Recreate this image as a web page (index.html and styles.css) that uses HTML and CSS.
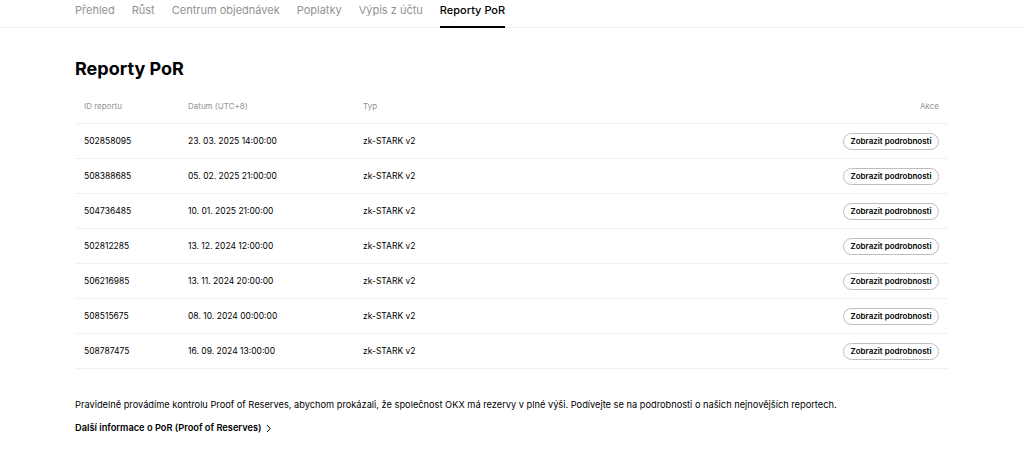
FILE: index.html
```html
<!DOCTYPE html>
<html lang="cs">
<head>
    <meta charset="UTF-8" />
    <meta name="viewport" content="width=device-width, initial-scale=1.0" />
    <title>Reporty PoR</title>
    <link rel="stylesheet" href="styles.css">
</head>
<body>

    <nav class="tabs">
        <a class="tab">Přehled</a>
        <a class="tab">Růst</a>
        <a class="tab">Centrum objednávek</a>
        <a class="tab">Poplatky</a>
        <a class="tab">Výpis z účtu</a>
        <a class="tab active">Reporty PoR</a>
    </nav>

    <main class="content">
        <h1>Reporty PoR</h1>

        <table class="reports">
            <thead>
                <tr>
                    <th class="col-id">ID reportu</th>
                    <th class="col-date">Datum (UTC+8)</th>
                    <th>Typ</th>
                    <th class="col-action">Akce</th>
                </tr>
            </thead>
            <tbody>
                <tr>
                    <td>502858095</td>
                    <td>23. 03. 2025 14:00:00</td>
                    <td>zk-STARK v2</td>
                    <td class="col-action"><button class="details">Zobrazit podrobnosti</button></td>
                </tr>
                <tr>
                    <td>508388685</td>
                    <td>05. 02. 2025 21:00:00</td>
                    <td>zk-STARK v2</td>
                    <td class="col-action"><button class="details">Zobrazit podrobnosti</button></td>
                </tr>
                <tr>
                    <td>504736485</td>
                    <td>10. 01. 2025 21:00:00</td>
                    <td>zk-STARK v2</td>
                    <td class="col-action"><button class="details">Zobrazit podrobnosti</button></td>
                </tr>
                <tr>
                    <td>502812285</td>
                    <td>13. 12. 2024 12:00:00</td>
                    <td>zk-STARK v2</td>
                    <td class="col-action"><button class="details">Zobrazit podrobnosti</button></td>
                </tr>
                <tr>
                    <td>506216985</td>
                    <td>13. 11. 2024 20:00:00</td>
                    <td>zk-STARK v2</td>
                    <td class="col-action"><button class="details">Zobrazit podrobnosti</button></td>
                </tr>
                <tr>
                    <td>508515675</td>
                    <td>08. 10. 2024 00:00:00</td>
                    <td>zk-STARK v2</td>
                    <td class="col-action"><button class="details">Zobrazit podrobnosti</button></td>
                </tr>
                <tr>
                    <td>508787475</td>
                    <td>16. 09. 2024 13:00:00</td>
                    <td>zk-STARK v2</td>
                    <td class="col-action"><button class="details">Zobrazit podrobnosti</button></td>
                </tr>
            </tbody>
        </table>

        <p class="note">Pravidelně provádíme kontrolu Proof of Reserves, abychom prokázali, že společnost OKX má rezervy v plné výši. Podívejte se na podrobnosti o našich nejnovějších reportech.</p>
        <a class="more">Další informace o PoR (Proof of Reserves)
            <svg width="7" height="9" viewBox="0 0 7 9"><path d="M2 1l3.2 3.5L2 8" fill="none" stroke="#000" stroke-width="1"/></svg>
        </a>
    </main>

</body>
</html>
```

FILE: styles.css
```css
body {
    margin: 0;
    font-family: Inter, "Liberation Sans", sans-serif;
    color: #000;
    background-color: #fff;
}

.tabs {
    display: flex;
    gap: 17px;
    padding: 0 75px;
    border-bottom: 1px solid #eee;
}

.tab {
    font-size: 11px;
    line-height: 17px;
    color: #929292;
    padding-top: 2px;
    padding-bottom: 7px;
    border-bottom: 2px solid transparent;
    margin-bottom: -1px;
}

    .tab.active {
        color: #000;
        font-weight: 500;
        border-bottom-color: #000;
    }

.content {
    padding: 0 76px 0 75px;
}

h1 {
    font-size: 18px;
    font-weight: 700;
    line-height: 24px;
    margin: 29px 0 0;
}

.reports {
    width: 100%;
    border-collapse: collapse;
    table-layout: fixed;
    margin-top: 8px;
}

    .reports th {
        font-size: 8px;
        font-weight: 400;
        color: #929292;
        text-align: left;
        height: 34px;
        padding: 0 9px;
        border-bottom: 1px solid #f0f0f0;
    }

    .reports td {
        font-size: 8.5px;
        height: 34px;
        padding: 0 9px;
        border-bottom: 1px solid #f0f0f0;
    }

.col-id {
    width: 86px;
}

.col-date {
    width: 157px;
}

.reports .col-action {
    text-align: right;
    width: 160px;
}

.details {
    font-family: inherit;
    font-size: 8px;
    font-weight: 600;
    color: #000;
    background: #fff;
    border: 1px solid #bdbdbd;
    border-radius: 9px;
    height: 17px;
    padding: 0 6.5px;
    cursor: pointer;
}

.note {
    font-size: 9.25px;
    line-height: 14px;
    margin: 29px 0 0;
}

.more {
    display: inline-flex;
    align-items: center;
    gap: 4px;
    font-size: 9.25px;
    font-weight: 600;
    line-height: 14px;
    margin-top: 9px;
}
```
